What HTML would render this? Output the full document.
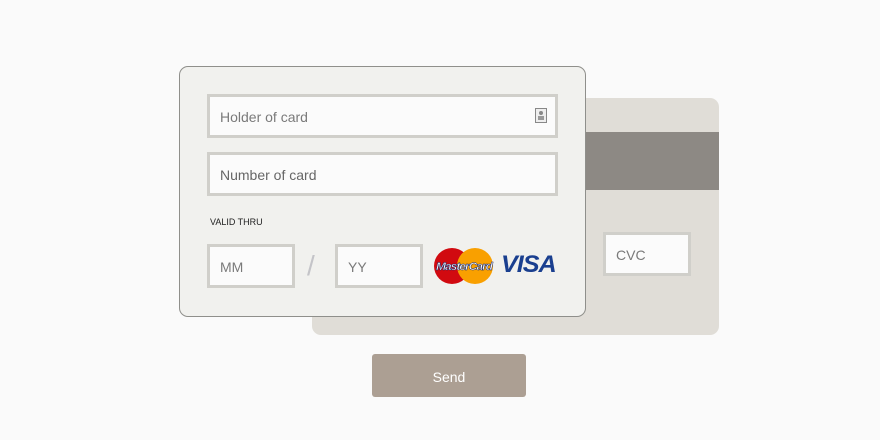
<!DOCTYPE html>
<html><head><meta charset="utf-8"><style>
body{margin:0;width:880px;height:440px;background:#fafafa;position:relative;overflow:hidden;font-family:"Liberation Sans",sans-serif}
.back{position:absolute;left:312px;top:98px;width:407px;height:237px;background:#e0ddd7;border-radius:9px}
.stripe{position:absolute;left:312px;top:132px;width:407px;height:58px;background:#8d8984}
.front{position:absolute;left:179px;top:66px;width:405px;height:249px;background:#f1f1ee;border:1px solid #8f8f8b;border-radius:9px}
.in{position:absolute;box-sizing:border-box;border:3px solid #d0cfca;background:#fbfbfb;color:#7a7a7a;font-size:14px;padding-left:10px;padding-top:2px;display:flex;align-items:center}
.lbl{position:absolute;left:210px;top:217px;font-size:9px;color:#222}
.slash{position:absolute;left:307px;top:250px;font-size:28px;color:#c4c4c8}
.btn{position:absolute;left:372px;top:354px;width:154px;height:43px;background:#ac9f93;border-radius:3px;color:#fff;font-size:14px;display:flex;align-items:center;justify-content:center;padding-top:2px;box-sizing:border-box}
</style></head><body>
<div class="back"></div><div class="stripe"></div>
<div class="in" style="left:603px;top:232px;width:88px;height:44px">CVC</div>
<div class="front"></div>
<div class="in" style="left:207px;top:94px;width:351px;height:44px">Holder of card
<svg style="position:absolute;right:8px;top:11px" width="12" height="15" viewBox="0 0 12 15"><rect x="0.5" y="0.5" width="11" height="14" fill="#eee" stroke="#888"/><circle cx="6" cy="5" r="2" fill="#888"/><rect x="3" y="8" width="6" height="4" fill="#999"/></svg></div>
<div class="in" style="left:207px;top:152px;width:351px;height:44px;color:#666">Number of card</div>
<div class="lbl">VALID THRU</div>
<div class="in" style="left:207px;top:244px;width:88px;height:44px">MM</div>
<div class="slash">/</div>
<div class="in" style="left:335px;top:244px;width:88px;height:44px">YY</div>
<svg style="position:absolute;left:433px;top:246px" width="62" height="40" viewBox="0 0 62 40">
<circle cx="19" cy="20" r="18" fill="#d10a10"/><circle cx="42" cy="20" r="18" fill="#f9a000"/>
<text x="31" y="24" text-anchor="middle" font-family="Liberation Sans" font-weight="bold" font-style="italic" font-size="11" fill="#fff" stroke="#1a2a6a" stroke-width="0.5" letter-spacing="-0.9" textLength="56" lengthAdjust="spacingAndGlyphs">MasterCard</text></svg>
<div style="position:absolute;left:501px;top:251px;font-size:24px;font-weight:bold;font-style:italic;color:#1a3f8f;letter-spacing:-1px;transform:scaleX(1.05);transform-origin:left">VISA</div>
<div class="btn">Send</div>
</body></html>
